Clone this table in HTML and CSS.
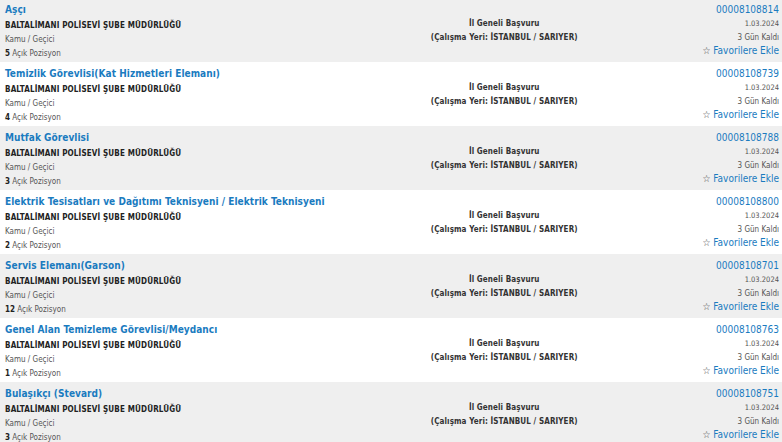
FILE: index.html
```html
<!DOCTYPE html>
<html lang="tr">
<head>
<meta charset="utf-8">
<link rel="stylesheet" href="styles.css">
</head>
<body>
<div class="list">
  <div class="row gray">
    <div class="left">
      <a class="title">Aşçı</a>
      <div class="org">BALTALİMANI POLİSEVİ ŞUBE MÜDÜRLÜĞÜ</div>
      <div class="meta">Kamu / Geçici</div>
      <div class="meta"><b>5</b> Açık Pozisyon</div>
    </div>
    <div class="mid"><div>İl Geneli Başvuru</div><div>(Çalışma Yeri: İSTANBUL / SARIYER)</div></div>
    <div class="right">
      <a class="num">00008108814</a>
      <div class="date">1.03.2024</div>
      <div class="days">3 Gün Kaldı</div>
      <a class="fav"><span class="star">☆</span> Favorilere Ekle</a>
    </div>
  </div>
  <div class="row">
    <div class="left">
      <a class="title">Temizlik Görevlisi(Kat Hizmetleri Elemanı)</a>
      <div class="org">BALTALİMANI POLİSEVİ ŞUBE MÜDÜRLÜĞÜ</div>
      <div class="meta">Kamu / Geçici</div>
      <div class="meta"><b>4</b> Açık Pozisyon</div>
    </div>
    <div class="mid"><div>İl Geneli Başvuru</div><div>(Çalışma Yeri: İSTANBUL / SARIYER)</div></div>
    <div class="right">
      <a class="num">00008108739</a>
      <div class="date">1.03.2024</div>
      <div class="days">3 Gün Kaldı</div>
      <a class="fav"><span class="star">☆</span> Favorilere Ekle</a>
    </div>
  </div>
  <div class="row gray">
    <div class="left">
      <a class="title">Mutfak Görevlisi</a>
      <div class="org">BALTALİMANI POLİSEVİ ŞUBE MÜDÜRLÜĞÜ</div>
      <div class="meta">Kamu / Geçici</div>
      <div class="meta"><b>3</b> Açık Pozisyon</div>
    </div>
    <div class="mid"><div>İl Geneli Başvuru</div><div>(Çalışma Yeri: İSTANBUL / SARIYER)</div></div>
    <div class="right">
      <a class="num">00008108788</a>
      <div class="date">1.03.2024</div>
      <div class="days">3 Gün Kaldı</div>
      <a class="fav"><span class="star">☆</span> Favorilere Ekle</a>
    </div>
  </div>
  <div class="row">
    <div class="left">
      <a class="title">Elektrik Tesisatları ve Dağıtımı Teknisyeni / Elektrik Teknisyeni</a>
      <div class="org">BALTALİMANI POLİSEVİ ŞUBE MÜDÜRLÜĞÜ</div>
      <div class="meta">Kamu / Geçici</div>
      <div class="meta"><b>2</b> Açık Pozisyon</div>
    </div>
    <div class="mid"><div>İl Geneli Başvuru</div><div>(Çalışma Yeri: İSTANBUL / SARIYER)</div></div>
    <div class="right">
      <a class="num">00008108800</a>
      <div class="date">1.03.2024</div>
      <div class="days">3 Gün Kaldı</div>
      <a class="fav"><span class="star">☆</span> Favorilere Ekle</a>
    </div>
  </div>
  <div class="row gray">
    <div class="left">
      <a class="title">Servis Elemanı(Garson)</a>
      <div class="org">BALTALİMANI POLİSEVİ ŞUBE MÜDÜRLÜĞÜ</div>
      <div class="meta">Kamu / Geçici</div>
      <div class="meta"><b>12</b> Açık Pozisyon</div>
    </div>
    <div class="mid"><div>İl Geneli Başvuru</div><div>(Çalışma Yeri: İSTANBUL / SARIYER)</div></div>
    <div class="right">
      <a class="num">00008108701</a>
      <div class="date">1.03.2024</div>
      <div class="days">3 Gün Kaldı</div>
      <a class="fav"><span class="star">☆</span> Favorilere Ekle</a>
    </div>
  </div>
  <div class="row">
    <div class="left">
      <a class="title">Genel Alan Temizleme Görevlisi/Meydancı</a>
      <div class="org">BALTALİMANI POLİSEVİ ŞUBE MÜDÜRLÜĞÜ</div>
      <div class="meta">Kamu / Geçici</div>
      <div class="meta"><b>1</b> Açık Pozisyon</div>
    </div>
    <div class="mid"><div>İl Geneli Başvuru</div><div>(Çalışma Yeri: İSTANBUL / SARIYER)</div></div>
    <div class="right">
      <a class="num">00008108763</a>
      <div class="date">1.03.2024</div>
      <div class="days">3 Gün Kaldı</div>
      <a class="fav"><span class="star">☆</span> Favorilere Ekle</a>
    </div>
  </div>
  <div class="row gray">
    <div class="left">
      <a class="title">Bulaşıkçı (Stevard)</a>
      <div class="org">BALTALİMANI POLİSEVİ ŞUBE MÜDÜRLÜĞÜ</div>
      <div class="meta">Kamu / Geçici</div>
      <div class="meta"><b>3</b> Açık Pozisyon</div>
    </div>
    <div class="mid"><div>İl Geneli Başvuru</div><div>(Çalışma Yeri: İSTANBUL / SARIYER)</div></div>
    <div class="right">
      <a class="num">00008108751</a>
      <div class="date">1.03.2024</div>
      <div class="days">3 Gün Kaldı</div>
      <a class="fav"><span class="star">☆</span> Favorilere Ekle</a>
    </div>
  </div>
</div>
</body>
</html>
```
FILE: styles.css
```css
html, body { margin: 0; padding: 0; background: #fff; }
body { font-family: "DejaVu Sans Condensed", "DejaVu Sans", sans-serif; color: #333; overflow: hidden; }
.list { margin-top: -2px; }
.row {
  display: grid;
  grid-template-columns: 50% 29% 21%;
  height: 64px;
  box-sizing: border-box;
  padding: 3px 3px 1px 5px;
  background: #fff;
}
.row.gray { background: #efefef; }
.left { display: flex; flex-direction: column; align-items: flex-start; }
.title { font-size: 10px; font-weight: bold; color: #1a7bbf; line-height: 18px; white-space: nowrap; letter-spacing: 0.05px; }
.org { font-size: 8px; font-weight: bold; color: #222; line-height: 14px; letter-spacing: 0.15px; }
.meta { font-size: 8px; color: #555; line-height: 13.5px; }
.meta b { color: #222; }
.mid { display: flex; flex-direction: column; justify-content: center; align-items: center; font-size: 8px; font-weight: bold; color: #333; line-height: 14px; letter-spacing: 0.1px; }
.right { display: flex; flex-direction: column; align-items: flex-end; padding-top: 2px; }
.num { font-size: 10px; color: #1a7bbf; line-height: 14px; }
.date { font-size: 7.5px; color: #555; line-height: 14px; }
.days { font-size: 8px; color: #555; line-height: 13px; }
.fav { font-size: 10px; color: #1a7bbf; line-height: 14px; }
.star { color: #444; font-size: 10px; }
```
